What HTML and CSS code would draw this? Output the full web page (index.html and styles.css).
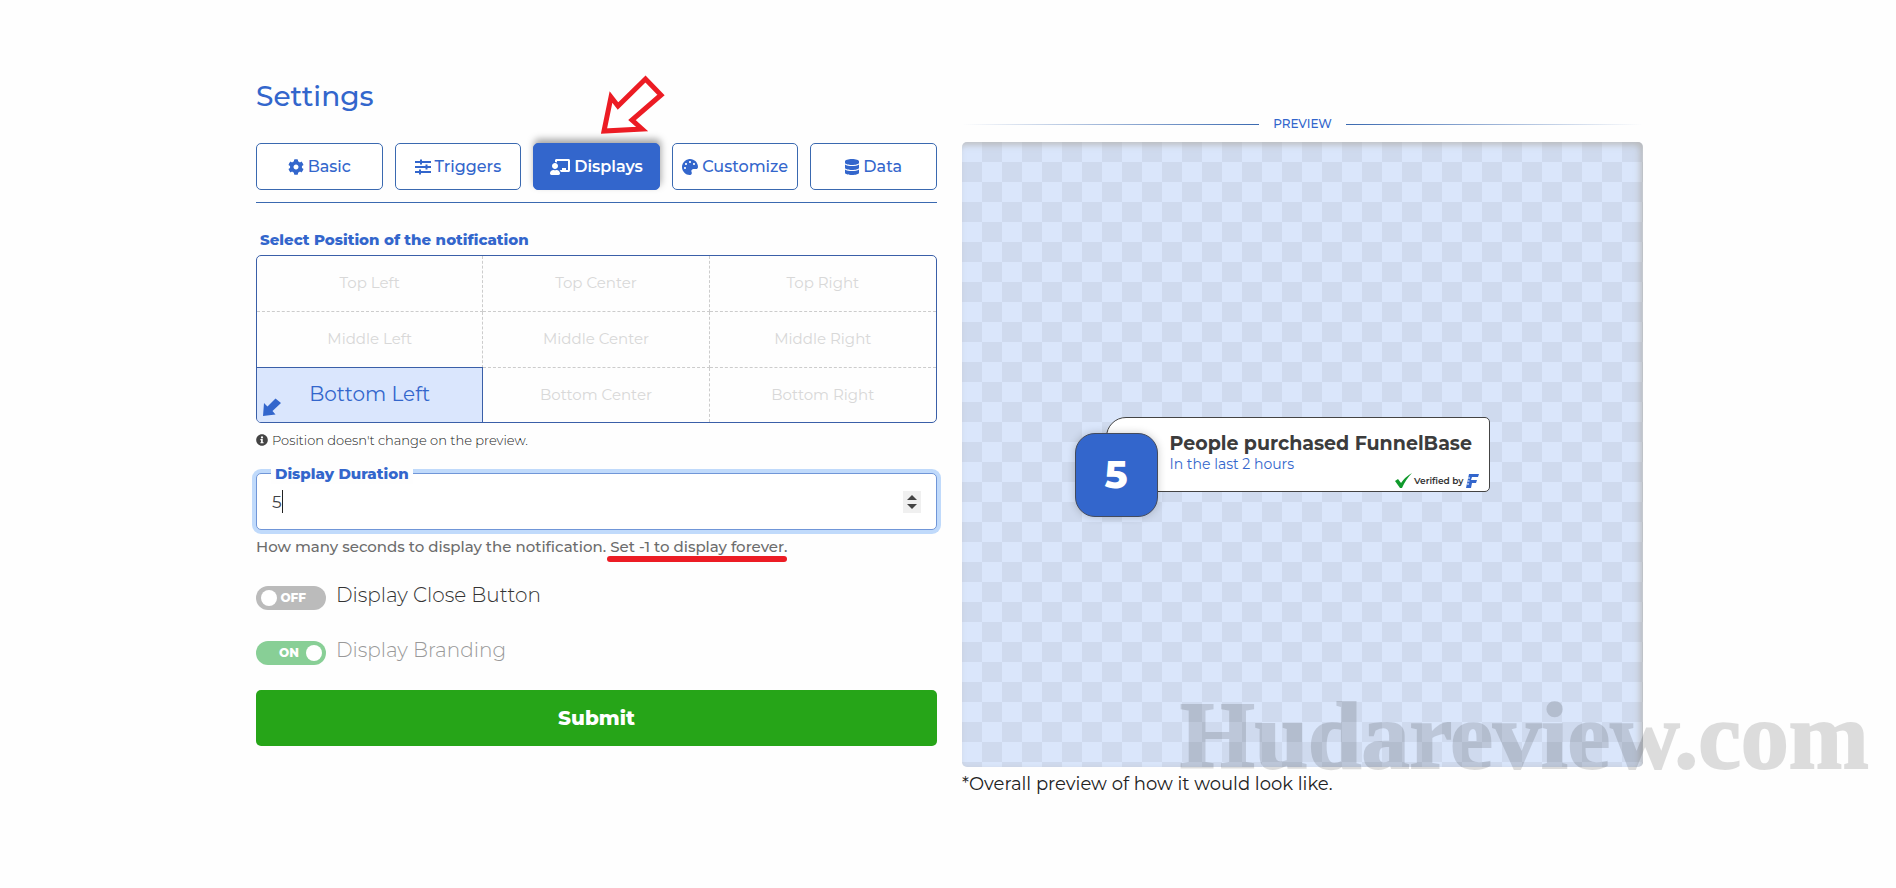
FILE: index.html
```html
<!DOCTYPE html>
<html lang="en">

<head>
    <meta charset="UTF-8">
    <meta name="viewport" content="width=device-width, initial-scale=1.0">
    <title>Settings</title>
    <link rel="stylesheet" href="styles.css">
</head>

<body>
    <div class="container">
        <main class="settings">
            <h1>Settings</h1>

            <nav class="tabs">
                <button type="button" class="tab">
                    <svg class="icon" viewBox="0 0 512 512"><path d="M487.4 315.7l-42.6-24.6c4.3-23.2 4.3-47 0-70.2l42.6-24.6c4.9-2.8 7.1-8.6 5.5-14-11.1-35.6-30-67.8-54.7-94.6-3.8-4.1-10-5.1-14.8-2.3L380.8 110c-17.9-15.4-38.5-27.3-60.8-35.1V25.8c0-5.6-3.9-10.5-9.4-11.7-36.7-8.2-74.3-7.8-109.2 0-5.5 1.2-9.4 6.1-9.4 11.7V75c-22.2 7.9-42.8 19.8-60.8 35.1L88.7 85.5c-4.9-2.8-11-1.9-14.8 2.3-24.7 26.7-43.6 58.9-54.7 94.6-1.7 5.4.6 11.2 5.5 14L67.3 221c-4.3 23.2-4.3 47 0 70.2l-42.6 24.6c-4.9 2.8-7.1 8.6-5.5 14 11.1 35.6 30 67.8 54.7 94.6 3.8 4.1 10 5.1 14.8 2.3l42.6-24.6c17.9 15.4 38.5 27.3 60.8 35.1v49.2c0 5.6 3.9 10.5 9.4 11.7 36.7 8.2 74.3 7.8 109.2 0 5.5-1.2 9.4-6.1 9.4-11.7v-49.2c22.2-7.9 42.8-19.8 60.8-35.1l42.6 24.6c4.9 2.8 11 1.9 14.8-2.3 24.7-26.7 43.6-58.9 54.7-94.6 1.5-5.5-.7-11.3-5.6-14.1zM256 336c-44.1 0-80-35.9-80-80s35.9-80 80-80 80 35.9 80 80-35.9 80-80 80z"/></svg>
                    Basic
                </button>
                <button type="button" class="tab">
                    <svg class="icon" viewBox="0 0 16 16"><path d="M0 2h16v2H0zM0 7h16v2H0zM0 12h16v2H0zM5 .5h2v5H5zM10.500 5.500h2v5h-2zM4 10.500h2v5H4z"/></svg>
                    Triggers
                </button>
                <button type="button" class="tab active">
                    <svg class="icon icon-wide" viewBox="0 0 640 512"><path d="M208 352c-2.39 0-4.78.35-7.06 1.09C187.98 357.3 174.35 360 160 360c-14.35 0-27.98-2.7-40.95-6.91-2.28-.74-4.66-1.09-7.05-1.09C49.94 352-.33 402.48 0 464.62.14 490.88 21.73 512 48 512h224c26.27 0 47.86-21.12 48-47.38.33-62.14-49.94-112.62-112-112.62zm-48-32c53.02 0 96-42.98 96-96s-42.98-96-96-96-96 42.98-96 96 42.98 96 96 96zM592 0H208c-26.47 0-48 22.25-48 49.59V96c23.42 0 45.1 6.78 64 17.8V64h352v288h-64v-64H384v64h-76.24c19.1 16.69 33.12 38.73 39.69 64H592c26.47 0 48-22.25 48-49.59V49.59C640 22.25 618.47 0 592 0z"/></svg>
                    Displays
                </button>
                <button type="button" class="tab">
                    <svg class="icon" viewBox="0 0 512 512"><path d="M204.3 5C104.9 24.4 24.8 104.3 5.2 203.4c-37 187 131.7 326.4 258.8 306.7 41.2-6.4 61.4-54.6 42.5-91.7-23.1-45.4 9.9-98.4 60.9-98.4h79.7c35.8 0 64.8-29.6 64.9-65.3C511.5 97.1 368.1-26.9 204.3 5zM96 320c-17.7 0-32-14.3-32-32s14.3-32 32-32 32 14.3 32 32-14.3 32-32 32zm32-128c-17.7 0-32-14.3-32-32s14.3-32 32-32 32 14.3 32 32-14.3 32-32 32zm128-64c-17.7 0-32-14.3-32-32s14.3-32 32-32 32 14.3 32 32-14.3 32-32 32zm128 64c-17.7 0-32-14.3-32-32s14.3-32 32-32 32 14.3 32 32-14.3 32-32 32z"/></svg>
                    Customize
                </button>
                <button type="button" class="tab">
                    <svg class="icon" viewBox="0 0 448 512"><path d="M448 73.143v45.714C448 159.143 347.667 192 224 192S0 159.143 0 118.857V73.143C0 32.857 100.333 0 224 0s224 32.857 224 73.143zM448 176v102.857C448 319.143 347.667 352 224 352S0 319.143 0 278.857V176c48.125 33.143 136.208 48.572 224 48.572S399.874 209.143 448 176zm0 160v102.857C448 479.143 347.667 512 224 512S0 479.143 0 438.857V336c48.125 33.143 136.208 48.572 224 48.572S399.874 369.143 448 336z"/></svg>
                    Data
                </button>
                <svg class="red-arrow" viewBox="0 0 66 64"><path d="M4 58L11 24L18 33L45.500 6L61 22L32 47L42 56Z"/></svg>
            </nav>

            <form>
                <fieldset class="position">
                    <legend>Select Position of the notification</legend>
                    <div class="position-grid">
                        <label><input type="radio" name="position">Top Left</label>
                        <label><input type="radio" name="position">Top Center</label>
                        <label><input type="radio" name="position">Top Right</label>
                        <label><input type="radio" name="position">Middle Left</label>
                        <label><input type="radio" name="position">Middle Center</label>
                        <label><input type="radio" name="position">Middle Right</label>
                        <label class="selected"><input type="radio" name="position" checked>Bottom Left
                            <svg class="corner-arrow" viewBox="0 0 18 18"><path d="M0 18L1 5L4.500 8.500L12.500 0.500L18 5L9.500 13L12.500 16.500Z"/></svg>
                        </label>
                        <label><input type="radio" name="position">Bottom Center</label>
                        <label><input type="radio" name="position">Bottom Right</label>
                    </div>
                </fieldset>
                <p class="note">
                    <svg class="icon-info" viewBox="0 0 512 512"><path d="M256 8C119 8 8 119 8 256s111 248 248 248 248-111 248-248S393 8 256 8zm0 90a48 48 0 1 1 0 96 48 48 0 0 1 0-96zm68 300H188v-48h28V264h-28v-48h100v134h36z"/></svg>
                    Position doesn't change on the preview.
                </p>

                <div class="field">
                    <label for="duration">Display Duration</label>
                    <input type="number" id="duration" value="5">
                    <span class="caret"></span>
                    <div class="stepper">
                        <button type="button" class="up" aria-label="Increase"></button>
                        <button type="button" class="down" aria-label="Decrease"></button>
                    </div>
                </div>
                <p class="help">How many seconds to display the notification. <span class="marked">Set -1 to display forever.</span></p>

                <label class="switch">
                    <input type="checkbox">
                    <span class="track">OFF</span>
                    <span class="switch-text">Display Close Button</span>
                </label>
                <label class="switch disabled">
                    <input type="checkbox" checked disabled>
                    <span class="track">ON</span>
                    <span class="switch-text">Display Branding</span>
                </label>

                <button type="submit" class="submit">Submit</button>
            </form>
        </main>

        <section class="preview">
            <h2>PREVIEW</h2>
            <div class="canvas">
                <div class="notification">
                    <div class="count">5</div>
                    <div class="card">
                        <h3>People purchased FunnelBase</h3>
                        <p>In the last 2 hours</p>
                        <div class="verified">
                            <svg class="check" viewBox="0 0 17 15"><path d="M0 8L3 6L6 10Q10 4 17 0Q11 6 7 15L5 15Z"/></svg>
                            Verified by
                            <svg class="brand" viewBox="0 0 13 14"><path d="M3 0H13L12 3H6L5 6H11L10 9H6L5 14H0Z"/><path class="brand-cut" d="M2 4h2M1.500 7h2M1 10h2"/></svg>
                        </div>
                    </div>
                </div>
                <div class="watermark">Hudareview.com</div>
            </div>
            <p class="caption">*Overall preview of how it would look like.</p>
        </section>
    </div>
</body>

</html>
```
FILE: styles.css
```css
* {
    box-sizing: border-box;
}

body {
    margin: 0;
    font-family: Montserrat, Inter, sans-serif;
    font-size: 16px;
    color: #212529;
    background-color: #fefefe;
    overflow-x: hidden;
}

h1, h2, h3, p {
    margin: 0;
    font-weight: 400;
}

button, input {
    font-family: inherit;
}

.container {
    display: grid;
    grid-template-columns: 1fr 1fr;
    gap: 25px;
    max-width: 1390px;
    margin: 0 auto;
    padding: 76px 0 80px 3px;
}

/* tabs */
h1 {
    font-size: 28px;
    line-height: 40px;
    font-weight: 500;
    color: #3366cc;
}

.tabs {
    position: relative;
    display: grid;
    grid-template-columns: repeat(5, 1fr);
    gap: 12px;
    margin-top: 27px;
    padding-bottom: 12px;
    border-bottom: 1px solid #3a69b0;
}

.tab {
    display: flex;
    align-items: center;
    justify-content: center;
    gap: 4px;
    height: 47px;
    padding: 0;
    font-size: 16px;
    font-weight: 500;
    color: #3366cc;
    background-color: #fff;
    border: 1px solid #3a69b0;
    border-radius: 5px;
}

.tab.active {
    font-weight: 600;
    color: #fff;
    background-color: #3366cc;
    border-color: #3366cc;
    box-shadow: 1px -4px 7px rgba(0, 0, 0, 0.35);
}

.icon {
    height: 16px;
    fill: currentColor;
}

.icon-wide {
    width: 20px;
}

.red-arrow {
    position: absolute;
    top: -70px;
    left: 344px;
    width: 66px;
    fill: #fff;
    stroke: #ec1c24;
    stroke-width: 5;
}

/* position picker */
.position {
    margin: 27px 0 0;
    padding: 0;
    border: 0;
}

.position legend {
    padding: 0 4px;
    font-size: 15px;
    line-height: 20px;
    font-weight: 800;
    color: #3366cc;
}

.position-grid {
    display: grid;
    grid-template-columns: repeat(3, 1fr);
    margin-top: 5px;
    border: 1px solid #3a5fa8;
    border-radius: 5px;
    overflow: hidden;
}

.position-grid label {
    position: relative;
    display: flex;
    align-items: center;
    justify-content: center;
    height: 56px;
    padding-bottom: 2px;
    font-size: 15px;
    color: #d8d8d8;
    border-right: 1px dashed #ccc;
    border-bottom: 1px dashed #ccc;
}

.position-grid label:nth-child(3n) {
    border-right: 0;
}

.position-grid label:nth-child(n+7) {
    height: 54px;
    border-bottom: 0;
}

.position-grid .selected {
    font-size: 20px;
    color: #3366cc;
    background-color: #dae6fd;
    border-right: 1px solid #3a5fa8;
    box-shadow: 0 -1px 0 #3a5fa8;
}

.position-grid input,
.switch input {
    position: absolute;
    opacity: 0;
}

.corner-arrow {
    position: absolute;
    left: 6px;
    bottom: 6px;
    width: 18px;
    fill: #3366cc;
}

.note {
    display: flex;
    align-items: center;
    gap: 4px;
    margin-top: 7px;
    font-size: 13px;
    line-height: 20px;
    font-weight: 300;
    color: #222;
}

.icon-info {
    width: 12px;
    fill: #444;
}

/* duration */
.field {
    position: relative;
    display: flex;
    align-items: center;
    height: 57px;
    margin-top: 23px;
    padding: 0 15px;
    background-color: #fff;
    border: 1px solid #7096d8;
    border-radius: 5px;
    box-shadow: 0 0 0 4px #c0dafb;
}

.field label {
    position: absolute;
    top: -10px;
    left: 14px;
    padding: 0 4px;
    font-size: 15px;
    line-height: 20px;
    font-weight: 800;
    color: #3366cc;
    background-color: #fefefe;
}

.field input {
    flex: 1;
    padding: 0;
    font-size: 17px;
    color: #3d4247;
    background: none;
    border: 0;
    outline: 0;
    appearance: textfield;
}

.caret {
    position: absolute;
    left: 25px;
    width: 1px;
    height: 23px;
    background-color: #222;
}

.stepper {
    display: flex;
    flex-direction: column;
    align-items: center;
    justify-content: center;
    gap: 4px;
    width: 18px;
    height: 22px;
    background-color: #f0f0f0;
}

.stepper button {
    width: 0;
    height: 0;
    padding: 0;
    background: none;
    border: 5px solid transparent;
}

.stepper .up {
    border-top: 0;
    border-bottom-color: #444;
}

.stepper .down {
    border-bottom: 0;
    border-top-color: #444;
}

.help {
    margin-top: 7px;
    font-size: 15px;
    line-height: 20px;
    font-weight: 500;
    color: #6c6c6c;
}

.marked {
    position: relative;
}

.marked::after {
    content: "";
    position: absolute;
    top: 19px;
    left: -3px;
    right: 0;
    height: 6px;
    border-radius: 3px;
    background-color: #ec1c24;
}

/* switches */
.switch {
    display: flex;
    align-items: center;
    gap: 10px;
    height: 25px;
    margin-top: 28px;
    font-size: 20px;
    font-weight: 300;
    color: #333;
}

.switch-text {
    padding-bottom: 5px;
}

.track {
    display: flex;
    align-items: center;
    justify-content: space-between;
    width: 70px;
    height: 24px;
    padding: 0 20px 0 5px;
    font-size: 12px;
    font-weight: 800;
    color: #fff;
    background-color: #bbb;
    border-radius: 12px;
}

.track::before {
    content: "";
    width: 16px;
    height: 16px;
    border-radius: 50%;
    background-color: #fff;
}

.switch input:checked + .track {
    flex-direction: row-reverse;
    padding: 0 4px 0 23px;
    background-color: #88cf96;
}

.switch + .switch {
    margin-top: 30px;
}

.switch.disabled {
    color: #999;
}

.submit {
    display: block;
    width: 100%;
    height: 56px;
    margin-top: 25px;
    font-size: 20px;
    font-weight: 800;
    color: #fff;
    background-color: #26a518;
    border: 0;
    border-radius: 5px;
}

/* preview */
.preview {
    padding-top: 38px;
}

h2 {
    display: flex;
    align-items: center;
    gap: 14px;
    font-size: 12px;
    line-height: 20px;
    font-weight: 500;
    color: #3366cc;
}

h2::before,
h2::after {
    content: "";
    flex: 1;
    height: 1px;
    background: linear-gradient(to right, transparent, #3a69b0);
}

h2::after {
    background: linear-gradient(to left, transparent, #3a69b0);
}

.canvas {
    position: relative;
    display: flex;
    align-items: center;
    justify-content: center;
    height: 625px;
    margin-top: 8px;
    padding-top: 24px;
    border-radius: 5px;
    background: conic-gradient(#cfdaee 25%, #dae6fb 0 50%, #cfdaee 0 75%, #dae6fb 0) 0 0 / 40px 40px;
    box-shadow: inset -3px 3px 6px rgba(170, 165, 155, 0.6);
}

.notification {
    display: flex;
    align-items: flex-start;
    margin-left: -41px;
}

.count {
    z-index: 1;
    display: flex;
    align-items: center;
    justify-content: center;
    width: 83px;
    height: 84px;
    margin: 16px -52px 0 0;
    font-size: 38px;
    font-weight: 800;
    color: #fff;
    background-color: #3366cc;
    border: 1px solid #444b5c;
    border-radius: 20px;
    box-shadow: 0 0 8px rgba(0, 0, 0, 0.2);
}

.card {
    width: 384px;
    height: 75px;
    padding: 14px 10px 0 63px;
    background-color: #fff;
    border: 1px solid #444;
    border-radius: 20px 5px 5px 5px;
}

h3 {
    font-size: 19px;
    line-height: 24px;
    font-weight: 700;
    color: #3c3c3c;
    white-space: nowrap;
}

.card p {
    font-size: 14px;
    line-height: 17px;
    color: #3366cc;
}

.verified {
    display: flex;
    align-items: center;
    justify-content: flex-end;
    gap: 2px;
    font-size: 9px;
    line-height: 16px;
    font-weight: 600;
    color: #333;
}

.check {
    width: 17px;
    fill: #109a2c;
}

.brand {
    width: 13px;
    fill: #3366cc;
}

.brand-cut {
    stroke: #fff;
}

.watermark {
    position: absolute;
    left: 218px;
    bottom: -11px;
    font-family: "Liberation Serif", serif;
    font-size: 96px;
    line-height: 84px;
    font-weight: 700;
    color: #000;
    -webkit-text-stroke: 2px #000;
    opacity: 0.13;
    white-space: nowrap;
    pointer-events: none;
}

.caption {
    margin-top: 5px;
    font-size: 18px;
    line-height: 24px;
    color: #222;
}
```
